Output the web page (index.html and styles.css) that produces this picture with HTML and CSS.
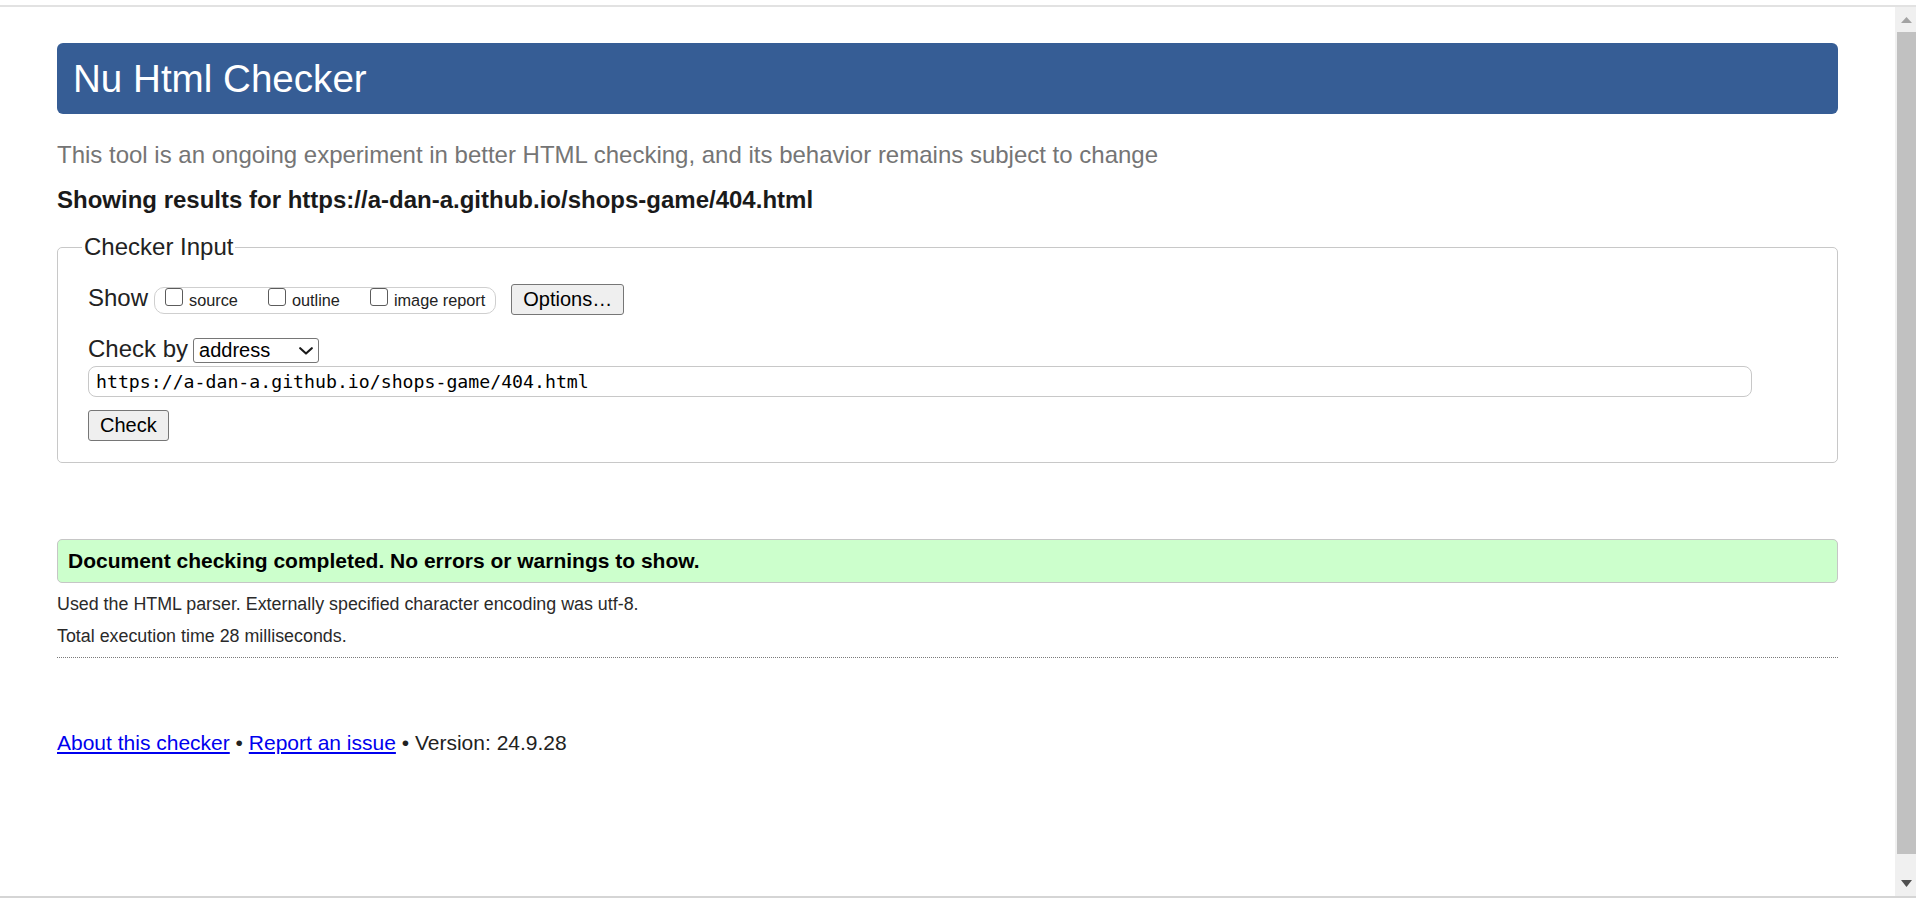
FILE: index.html
```html
<!DOCTYPE html>
<html lang="en">
<head>
<meta charset="utf-8">
<title>Showing results for https://a-dan-a.github.io/shops-game/404.html - Nu Html Checker</title>
<link rel="stylesheet" href="styles.css">
</head>
<body>
<div class="frame-top"></div>
<div class="window">
  <main class="page">
    <h1 class="title">Nu Html Checker</h1>
    <p class="about">This tool is an ongoing experiment in better HTML checking, and its behavior remains subject to change</p>
    <p class="showing">Showing results for https://a-dan-a.github.io/shops-game/404.html</p>
    <form class="checker">
      <fieldset class="input-set">
        <legend class="input-legend">Checker Input</legend>
        <div class="row show-row">
          <span class="row-label">Show</span>
          <div class="show-group">
            <label class="opt"><input type="checkbox" class="cb">source</label>
            <label class="opt"><input type="checkbox" class="cb">outline</label>
            <label class="opt"><input type="checkbox" class="cb">image report</label>
          </div>
          <button type="button" class="btn options-btn">Options…</button>
        </div>
        <div class="row by-row">
          <span class="row-label">Check by</span>
          <span class="select-wrap">
            <select class="by-select"><option>address</option></select>
            <svg class="chevron" viewBox="0 0 14 8" width="14" height="8" aria-hidden="true"><path d="M1.2 1.2 L7 6.6 L12.8 1.2" fill="none" stroke="#1a1a1a" stroke-width="2.1" stroke-linecap="round" stroke-linejoin="round"/></svg>
          </span>
        </div>
        <input class="doc-url" type="url" value="https://a-dan-a.github.io/shops-game/404.html">
        <button type="button" class="btn check-btn">Check</button>
      </fieldset>
    </form>
    <p class="success">Document checking completed. No errors or warnings to show.</p>
    <p class="details">Used the HTML parser. Externally specified character encoding was utf-8.</p>
    <p class="details">Total execution time 28 milliseconds.</p>
    <hr class="sep">
    <p class="footer"><a href="#">About this checker</a> • <a href="#">Report an issue</a> • Version: 24.9.28</p>
  </main>
  <div class="scrollbar" aria-hidden="true">
    <div class="sb-btn"><svg viewBox="0 0 11 6" width="11" height="6"><polygon points="0,6 5.5,0 11,6" fill="#a3a3a3"/></svg></div>
    <div class="sb-thumb"></div>
    <div class="sb-rest"></div>
    <div class="sb-btn"><svg viewBox="0 0 11 7" width="11" height="7"><polygon points="0,0 11,0 5.5,7" fill="#505050"/></svg></div>
  </div>
</div>
<div class="frame-bottom"></div>
</body>
</html>
```

FILE: styles.css
```css
html, body {
  margin: 0;
  height: 100%;
  overflow: hidden;
  background: #fff;
}

body {
  display: flex;
  flex-direction: column;
  font-family: "Liberation Sans", Arial, sans-serif;
  color: #222;
}

.frame-top {
  flex: none;
  height: 5px;
  border-bottom: 2px solid #e2e2e2;
}

.frame-bottom {
  flex: none;
  height: 2px;
  background: #d5d5d5;
}

.window {
  flex: 1;
  display: flex;
  min-height: 0;
}

.page {
  flex: 1;
  min-width: 0;
  padding: 36px 57px 0;
}

.title {
  margin: 0;
  height: 71px;
  padding: 0 16px;
  line-height: 71px;
  font-size: 38.6px;
  font-weight: normal;
  color: #fff;
  background: #365d95;
  border-radius: 6px;
}

.about {
  margin: 27px 0 0;
  font-size: 24px;
  line-height: 28px;
  color: #757575;
}

.showing {
  margin: 17px 0 0;
  font-size: 24px;
  line-height: 28px;
  font-weight: bold;
  color: #1a1a1a;
}

.checker {
  margin: 19px 0 0;
}

.input-set {
  margin: 0;
  min-width: 0;
  padding: 23px 30px 21px;
  border: 1px solid #c8c8c8;
  border-radius: 5px;
}

.input-legend {
  margin-left: -6px;
  padding: 0 2px;
  font-size: 24px;
  line-height: 28px;
  color: #222;
}

.row {
  display: flex;
  align-items: baseline;
  font-size: 24px;
  line-height: 28px;
}

.by-row {
  margin-top: 20px;
}

.show-group {
  display: flex;
  align-items: baseline;
  margin-left: 6px;
  height: 27px;
  box-sizing: border-box;
  padding: 0 10px;
  border: 1px solid #cfcfcf;
  border-radius: 10px;
  font-size: 16.3px;
  line-height: 25px;
}

.opt {
  margin-right: 30px;
}

.opt:last-child {
  margin-right: 0;
}

.cb {
  -webkit-appearance: none;
  appearance: none;
  box-sizing: border-box;
  width: 18px;
  height: 18px;
  margin: 0 6px 0 0;
  border: 1px solid #5c5c5c;
  border-radius: 3px;
  background: #fff;
  vertical-align: top;
}

.btn {
  height: 31px;
  box-sizing: border-box;
  margin: 0;
  padding: 3px 11px;
  border: 1px solid #767676;
  border-radius: 3px;
  background: #efefef;
  font-family: inherit;
  font-size: 20px;
  line-height: 23px;
  color: #000;
}

.options-btn {
  margin-left: 15px;
}

.select-wrap {
  position: relative;
  display: flex;
  margin-left: 5px;
}

.by-select {
  -webkit-appearance: none;
  appearance: none;
  box-sizing: border-box;
  width: 126px;
  height: 25px;
  margin: 0;
  padding: 0 0 0 5px;
  border: 1px solid #767676;
  border-radius: 3px;
  background: #fff;
  font-family: inherit;
  font-size: 20px;
  line-height: 23px;
  color: #000;
}

.chevron {
  position: absolute;
  right: 6px;
  top: 9px;
  pointer-events: none;
}

.doc-url {
  display: block;
  width: calc(100% - 55px);
  height: 31px;
  box-sizing: border-box;
  margin: 3px 0 0;
  padding: 0 7px;
  border: 1px solid #c8c8c8;
  border-radius: 8px;
  font-family: "DejaVu Sans Mono", monospace;
  font-size: 18.2px;
  color: #000;
  background: #fff;
}

.check-btn {
  display: block;
  margin-top: 13px;
}

.success {
  margin: 76px 0 0;
  height: 44px;
  box-sizing: border-box;
  padding: 0 10px;
  border: 1px solid #c6c6c6;
  border-radius: 5px;
  background: #ccffcc;
  font-size: 21px;
  line-height: 42px;
  font-weight: bold;
  color: #000;
}

.details {
  margin: 10px 0 0;
  font-size: 17.85px;
  line-height: 22px;
  color: #2a2a2a;
}

.sep {
  margin: 10px 0 0;
  height: 0;
  border: 0;
  border-top: 1px dotted #7a7a7a;
}

.footer {
  margin: 73px 0 0;
  font-size: 21px;
  line-height: 24px;
  color: #222;
}

.footer a {
  color: #0000ee;
}

.scrollbar {
  flex: none;
  width: 21px;
  display: flex;
  flex-direction: column;
  background: #f0f0f0;
}

.sb-btn {
  flex: none;
  height: 25px;
  display: flex;
  align-items: center;
  justify-content: center;
  padding-left: 2px;
}

.sb-thumb {
  flex: none;
  height: 822px;
  margin-left: 2px;
  background: #c1c1c1;
}

.sb-rest {
  flex: 1;
}
```
